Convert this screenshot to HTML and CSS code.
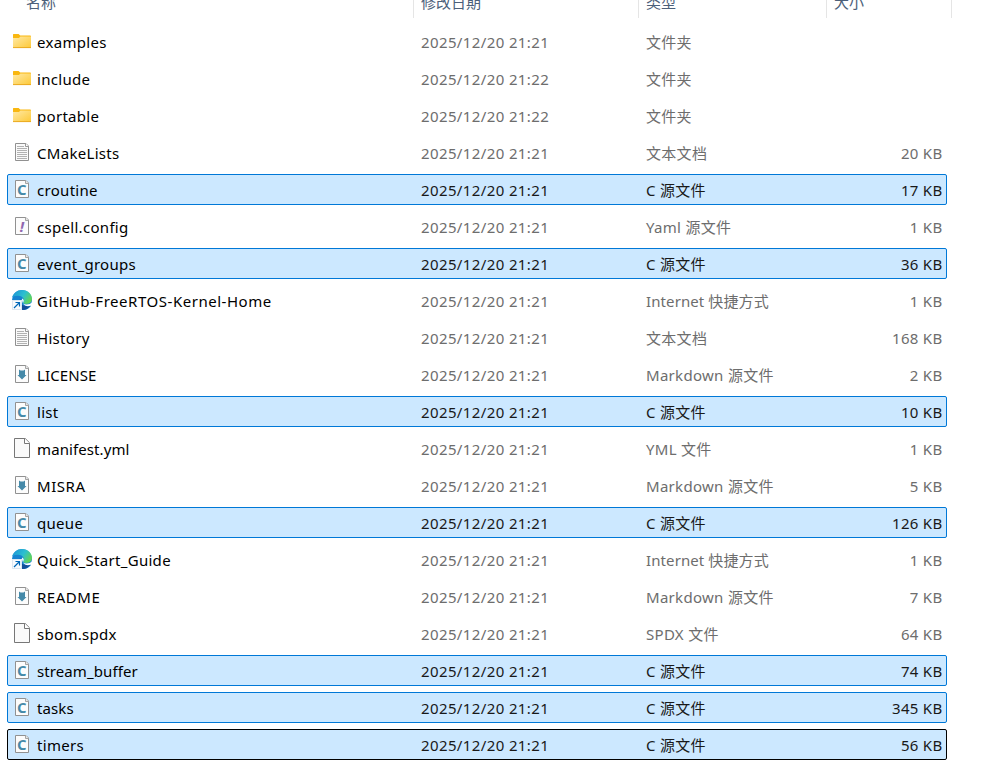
FILE: index.html
```html
<!DOCTYPE html>
<html lang="zh">

<head>
	<meta charset="UTF-8">
	<meta name="viewport" content="width=device-width, initial-scale=1.0">
	<title>FreeRTOS-Kernel</title>
	<link rel="stylesheet" href="styles.css">
</head>

<body>
	<svg class="defs" width="0" height="0">
		<linearGradient id="folderFill" x1="0" y1="0" x2="1" y2="1">
			<stop offset="0" stop-color="#ffe9a6" />
			<stop offset="1" stop-color="#fdc937" />
		</linearGradient>
		<linearGradient id="edgeTop" x1="0" y1="0" x2="1" y2="0.5">
			<stop offset="0" stop-color="#1b8fd8" />
			<stop offset="0.6" stop-color="#2bbfd0" />
			<stop offset="1" stop-color="#5fd35c" />
		</linearGradient>
		<symbol id="folder" viewBox="0 0 20 20">
			<path d="M1 3.6q0-.6.6-.6h5l1.6 1.6h10q.8 0 .8.8V8H1z" fill="#f9b710" />
			<path d="M1 7h6l1.4-1.4H19V17H1z" fill="url(#folderFill)" />
			<path d="M1 16.6h18" stroke="#e8a51c" stroke-width=".9" />
		</symbol>
		<symbol id="page" viewBox="0 0 20 20">
			<path d="M3.5 1.5h10.5l2.5 2.5v14.5h-13z" fill="#fcfcfc" stroke="#919191" />
			<path d="M13.5 1.5v3h3" fill="#e6e6e6" stroke="#a5a5a5" />
		</symbol>
		<symbol id="txt" viewBox="0 0 20 20">
			<path d="M3.5 1.5h10.5l2.5 2.5v14.5h-13z" fill="#fafafa" stroke="#919191" />
			<path d="M5 4.5h7M5 6.5h10M5 8.5h10M5 10.5h10M5 12.5h10M5 14.5h10M5 16.5h10" stroke="#b2b2b2" />
			<path d="M13.5 1.5v3h3" fill="#fff" stroke="#999" />
		</symbol>
		<symbol id="c" viewBox="0 0 20 20">
			<use href="#page" />
			<text x="9.7" y="15.5" class="letter blue">C</text>
		</symbol>
		<symbol id="yaml" viewBox="0 0 20 20">
			<use href="#page" />
			<text x="10" y="15.5" class="letter purple">!</text>
		</symbol>
		<symbol id="md" viewBox="0 0 20 20">
			<use href="#page" />
			<path d="M7 5.5l1.5 1h3l1.500-1V11h1.500L10 15.500 5.500 11H7z" fill="#468aa9" />
		</symbol>
		<symbol id="file" viewBox="0 0 20 20">
			<path d="M2.5.5h10.700l4.300 4.300v14.700h-15z" fill="#fafafa" stroke="#777" />
			<path d="M12.5.5v5h5" fill="#fff" stroke="#777" />
		</symbol>
		<symbol id="edge" viewBox="0 0 20 20">
			<path d="M0 10a10 10 0 0 1 20 0l-1 6a10 10 0 0 1-9 4z" fill="#1683d0" />
			<path d="M0 8C1 3.300 5 0 10 0c6 0 10 4.300 10 8.800 0 3.500-2.800 5.200-5.800 5.200-2.400 0-3.500-1-3-1.900 1.300-1.700.6-5.800-3.600-6.200C4 5.500 1 6 0 8z" fill="url(#edgeTop)" />
			<path d="M8.500 8.500c-1.300 4.500 2 8.800 9.800 7.200C16 19 13 20 10.500 20 7 18 5.500 12 8.500 8.500z" fill="#124f99" />
			<path d="M10 8.500c2 .8 2.300 2.600 1.100 3.900-.5 1.300 1.500 2.100 3.500 2 2.200 0 4-.7 5.400-2V16l-1.700-.3C14 17.300 9.800 14.500 10 8.500z" fill="#fff" />
			<path d="M0 10h10v10H0z" fill="#fff" />
			<path d="M.5 10.500h9v9h-9z" fill="#f8fbfe" stroke="#c8d8e8" stroke-width=".6" />
			<path d="M2 18l5-5M3.500 12.500h4v4" fill="none" stroke="#0067b8" stroke-width="1.200" />
		</symbol>
	</svg>

	<div class="head">
		<div class="th first">名称</div>
		<div class="th">修改日期</div>
		<div class="th">类型</div>
		<div class="th">大小</div>
	</div>
	<ul class="list">
		<li><svg class="icon"><use href="#folder" /></svg><span class="name">examples</span><span class="date">2025/12/20 21:21</span><span>文件夹</span><span class="size"></span></li>
		<li><svg class="icon"><use href="#folder" /></svg><span class="name">include</span><span class="date">2025/12/20 21:22</span><span>文件夹</span><span class="size"></span></li>
		<li><svg class="icon"><use href="#folder" /></svg><span class="name">portable</span><span class="date">2025/12/20 21:22</span><span>文件夹</span><span class="size"></span></li>
		<li><svg class="icon"><use href="#txt" /></svg><span class="name">CMakeLists</span><span class="date">2025/12/20 21:21</span><span>文本文档</span><span class="size">20 KB</span></li>
		<li class="selected"><svg class="icon"><use href="#c" /></svg><span class="name">croutine</span><span class="date">2025/12/20 21:21</span><span>C 源文件</span><span class="size">17 KB</span></li>
		<li><svg class="icon"><use href="#yaml" /></svg><span class="name">cspell.config</span><span class="date">2025/12/20 21:21</span><span>Yaml 源文件</span><span class="size">1 KB</span></li>
		<li class="selected"><svg class="icon"><use href="#c" /></svg><span class="name">event_groups</span><span class="date">2025/12/20 21:21</span><span>C 源文件</span><span class="size">36 KB</span></li>
		<li><svg class="icon"><use href="#edge" /></svg><span class="name wide">GitHub-FreeRTOS-Kernel-Home</span><span class="date">2025/12/20 21:21</span><span class="tight">Internet 快捷方式</span><span class="size">1 KB</span></li>
		<li><svg class="icon"><use href="#txt" /></svg><span class="name">History</span><span class="date">2025/12/20 21:21</span><span>文本文档</span><span class="size">168 KB</span></li>
		<li><svg class="icon"><use href="#md" /></svg><span class="name tight">LICENSE</span><span class="date">2025/12/20 21:21</span><span>Markdown 源文件</span><span class="size">2 KB</span></li>
		<li class="selected"><svg class="icon"><use href="#c" /></svg><span class="name">list</span><span class="date">2025/12/20 21:21</span><span>C 源文件</span><span class="size">10 KB</span></li>
		<li><svg class="icon"><use href="#file" /></svg><span class="name tight">manifest.yml</span><span class="date">2025/12/20 21:21</span><span>YML 文件</span><span class="size">1 KB</span></li>
		<li><svg class="icon"><use href="#md" /></svg><span class="name wide">MISRA</span><span class="date">2025/12/20 21:21</span><span>Markdown 源文件</span><span class="size">5 KB</span></li>
		<li class="selected"><svg class="icon"><use href="#c" /></svg><span class="name">queue</span><span class="date">2025/12/20 21:21</span><span>C 源文件</span><span class="size">126 KB</span></li>
		<li><svg class="icon"><use href="#edge" /></svg><span class="name">Quick_Start_Guide</span><span class="date">2025/12/20 21:21</span><span class="tight">Internet 快捷方式</span><span class="size">1 KB</span></li>
		<li><svg class="icon"><use href="#md" /></svg><span class="name wide">README</span><span class="date">2025/12/20 21:21</span><span>Markdown 源文件</span><span class="size">7 KB</span></li>
		<li><svg class="icon"><use href="#file" /></svg><span class="name">sbom.spdx</span><span class="date">2025/12/20 21:21</span><span>SPDX 文件</span><span class="size">64 KB</span></li>
		<li class="selected"><svg class="icon"><use href="#c" /></svg><span class="name tight">stream_buffer</span><span class="date">2025/12/20 21:21</span><span>C 源文件</span><span class="size">74 KB</span></li>
		<li class="selected"><svg class="icon"><use href="#c" /></svg><span class="name tight">tasks</span><span class="date">2025/12/20 21:21</span><span>C 源文件</span><span class="size">345 KB</span></li>
		<li class="selected focus"><svg class="icon"><use href="#c" /></svg><span class="name">timers</span><span class="date">2025/12/20 21:21</span><span>C 源文件</span><span class="size">56 KB</span></li>
	</ul>
</body>

</html>
```
FILE: styles.css
```css
* {
	padding: 0;
	margin: 0;
	list-style: none;
	box-sizing: border-box;
}

body {
	background: #fff;
	font-family: "Noto Sans", "Noto Sans CJK SC", sans-serif;
	font-size: 15px;
	letter-spacing: 0.3px;
	overflow: hidden;
}

.defs {
	display: block;
}

/* header row is scrolled half out of view */
.head {
	display: grid;
	grid-template-columns: 414px 225px 188px 125px;
	height: 18px;
	overflow: hidden;
	color: #4c607a;
	letter-spacing: 0;
}

.th {
	height: 26px;
	margin-top: -8px;
	padding-left: 7px;
	line-height: 20px;
	border-right: 1px solid #e5e5e5;
}

.th.first {
	padding-left: 26px;
}

.list {
	width: 940px;
	margin: 8px 0 0 7px;
}

.list li {
	display: grid;
	grid-template-columns: 29px 384px 225px 180px 1fr;
	height: 31px;
	margin-bottom: 6px;
	padding-right: 4px;
	border: 1px solid transparent;
	border-radius: 2px;
	line-height: 30px;
	color: #6d6d6d;
	white-space: nowrap;
}

.list .icon {
	width: 20px;
	height: 20px;
	margin: 4px 0 0 4px;
}

.list .name {
	color: #000;
}

.list .date {
	letter-spacing: 0.38px;
}

.list .wide {
	letter-spacing: 0.53px;
}

.list .tight {
	letter-spacing: 0.1px;
}

.list .size {
	text-align: right;
	margin-right: -0.5px;
}

.list .selected {
	background: #cce8ff;
	border-color: #0078d7;
	color: #191919;
}

.list .focus {
	border-color: #000;
}

.letter {
	font-family: "Open Sans", sans-serif;
	font-size: 15px;
	font-weight: bold;
	letter-spacing: 0;
	text-anchor: middle;
}

.blue {
	fill: #468aa9;
}

.purple {
	fill: #9068b0;
	font-style: italic;
}
```
